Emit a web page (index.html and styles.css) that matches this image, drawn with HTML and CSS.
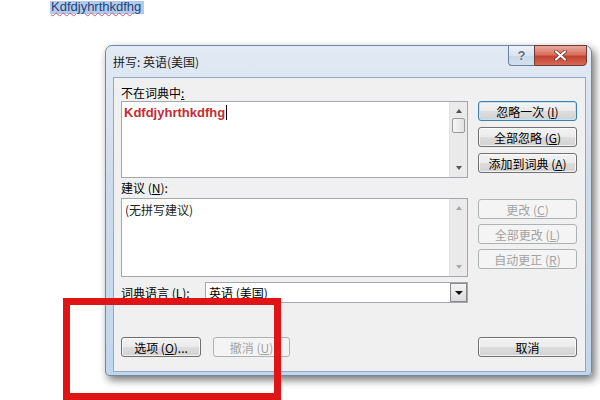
FILE: index.html
```html
<!DOCTYPE html>
<html lang="zh-CN">
<head>
    <meta charset="UTF-8">
    <title>拼写: 英语(美国)</title>
    <link rel="stylesheet" href="styles.css">
</head>
<body>
    <div class="doc-line"><span class="doc-word">Kdfdjyhrthkdfhg</span></div>

    <div class="window">
        <div class="titlebar">
            <span class="title">拼写: 英语(美国)</span>
            <div class="caption-buttons">
                <span class="cap-btn help">?</span>
                <span class="cap-btn close">
                    <svg width="13" height="11" viewBox="0 0 13 11">
                        <path d="M2 1.5 L11 9.5 M11 1.5 L2 9.5" stroke="#6b2a22" stroke-width="3.6" stroke-linecap="round"/>
                        <path d="M2 1.5 L11 9.5 M11 1.5 L2 9.5" stroke="#ffffff" stroke-width="2.2" stroke-linecap="round"/>
                    </svg>
                </span>
            </div>
        </div>

        <div class="client">
            <div class="label first">不在词典中<u>:</u></div>
            <div></div>

            <div class="textbox tall">
                <span class="bad-word">Kdfdjyhrthkdfhg</span><span class="caret"></span>
                <div class="vscroll">
                    <span class="arrow up"></span>
                    <span class="thumb"></span>
                    <span class="arrow down"></span>
                </div>
            </div>
            <div class="btn-stack">
                <button type="button" class="btn focus">忽略一次 (<u>I</u>)</button>
                <button type="button" class="btn">全部忽略 (<u>G</u>)</button>
                <button type="button" class="btn">添加到词典 (<u>A</u>)</button>
            </div>

            <div class="label second">建议 (<u>N</u>):</div>
            <div></div>

            <div class="textbox list">
                <span class="hint">(无拼写建议)</span>
                <div class="vscroll off">
                    <span class="arrow up"></span>
                    <span class="arrow down"></span>
                </div>
            </div>
            <div class="btn-stack lower">
                <button type="button" class="btn disabled">更改 (<u>C</u>)</button>
                <button type="button" class="btn disabled">全部更改 (<u>L</u>)</button>
                <button type="button" class="btn disabled">自动更正 (<u>R</u>)</button>
            </div>

            <div class="lang-row">
                <span class="lang-label">词典语言 (<u>L</u>):</span>
                <div class="select">
                    <span class="select-text">英语 (美国)</span>
                    <span class="select-btn"><span class="arrow down dark"></span></span>
                </div>
            </div>
            <div></div>

            <div class="bottom-row">
                <div class="bottom-left">
                    <button type="button" class="btn options">选项 (<u>O</u>)...</button>
                    <button type="button" class="btn disabled undo">撤消 (<u>U</u>)</button>
                </div>
                <button type="button" class="btn cancel">取消</button>
            </div>
        </div>
    </div>

    <div class="red-mark"></div>
</body>
</html>
```

FILE: styles.css
```css
body {
    margin: 0;
    width: 600px;
    height: 400px;
    overflow: hidden;
    position: relative;
    background-color: #ffffff;
    font-family: "Noto Sans CJK SC", "Liberation Sans", sans-serif;
    font-size: 12px;
    color: #000;
}

u {
    text-decoration: underline;
    text-underline-offset: 1px;
}

/* word selected in the document behind the dialog */
.doc-line {
    height: 13px;
    padding-left: 50px;
    line-height: 12px;
}

.doc-word {
    display: inline-block;
    padding: 0 3px 1px 1px;
    background-color: #b3cbe9;
    color: #1d4380;
    font-family: "Liberation Sans", sans-serif;
    font-size: 13px;
    text-decoration: underline wavy #c85a7a;
    text-decoration-thickness: 1px;
}

/* dialog window */
.window {
    margin: 32px 0 0 105px;
    width: 487px;
    height: 331px;
    box-sizing: border-box;
    border: 1px solid #6f88a3;
    border-radius: 7px 7px 4px 4px;
    background: linear-gradient(#e2eaf4, #cddcec 40%, #c2d6eb);
    box-shadow: 3px 4px 8px rgba(0, 0, 0, 0.55);
    display: flex;
    flex-direction: column;
}

.titlebar {
    height: 31px;
    flex-shrink: 0;
    display: flex;
    justify-content: space-between;
    align-items: flex-start;
    padding: 0 4px 0 7px;
}

.title {
    padding-top: 8px;
    line-height: 16px;
    color: #1a1a1a;
}

.caption-buttons {
    display: flex;
    margin-top: -1px;
}

.cap-btn {
    height: 21px;
    box-sizing: border-box;
    border: 1px solid #6a7f99;
    display: flex;
    align-items: center;
    justify-content: center;
}

.help {
    width: 26px;
    border-right: none;
    border-radius: 0 0 0 4px;
    background: linear-gradient(#eef3f9, #d8e3ef 50%, #c8d7e7 51%, #d3e0ee);
    font-family: "Liberation Sans", sans-serif;
    font-weight: bold;
    font-size: 13px;
    color: #5a6e86;
    text-shadow: 0 0 2px #ffffff;
}

.close {
    width: 53px;
    border-color: #6e3a35;
    border-radius: 0 0 4px 0;
    background: linear-gradient(#e9a99d, #d6705f 45%, #c4412f 55%, #d56a55);
}

.client {
    flex: 1;
    margin: 0 5px 3px 7px;
    border: 1px solid #94a9c1;
    background-color: #f0f0f0;
    padding: 0 8px 0 7px;
    display: grid;
    grid-template-columns: 347px 99px;
    column-gap: 10px;
    align-content: start;
}

.label.first {
    padding-top: 6px;
    height: 17px;
    line-height: 17px;
}

.label.second {
    height: 20px;
    line-height: 20px;
}

.textbox {
    position: relative;
    box-sizing: border-box;
    border: 1px solid #a4a7ad;
    background-color: #ffffff;
    padding: 1px 0 0 2px;
}

.textbox.tall {
    height: 77px;
}

.textbox.list {
    height: 79px;
    padding: 2px 0 0 3px;
}

.bad-word {
    font-family: "Liberation Sans", sans-serif;
    font-weight: bold;
    font-size: 13px;
    line-height: 15px;
    color: #c42b35;
}

.caret {
    display: inline-block;
    width: 1px;
    height: 15px;
    margin-left: 1px;
    vertical-align: -3px;
    background-color: #000;
}

.hint {
    line-height: 15px;
    color: #222;
}

/* scroll bars */
.vscroll {
    position: absolute;
    top: 0;
    right: 0;
    bottom: 0;
    width: 17px;
    background-color: #eaeaea;
    border-left: 1px solid #e2e2e2;
    display: flex;
    flex-direction: column;
    align-items: center;
}

.vscroll .arrow.up {
    margin-top: 7px;
}

.vscroll .arrow.down {
    margin-top: auto;
    margin-bottom: 7px;
}

.thumb {
    width: 13px;
    height: 15px;
    margin-top: 5px;
    box-sizing: border-box;
    border: 1px solid #9a9a9a;
    border-radius: 2px;
    background: linear-gradient(90deg, #f6f6f6, #e2e2e2);
}

.arrow {
    width: 0;
    height: 0;
    border-left: 3px solid transparent;
    border-right: 3px solid transparent;
}

.arrow.up {
    border-bottom: 4px solid #555;
}

.arrow.down {
    border-top: 4px solid #555;
}

.vscroll.off .arrow.up {
    border-bottom-color: #a8a8a8;
}

.vscroll.off .arrow.down {
    border-top-color: #a8a8a8;
}

.arrow.dark {
    border-top-color: #111;
    border-left-width: 4px;
    border-right-width: 4px;
}

/* push buttons */
.btn-stack {
    display: flex;
    flex-direction: column;
    gap: 6px;
}

.btn-stack.lower {
    padding-top: 1px;
    gap: 5px;
}

.btn {
    height: 20px;
    margin: 0;
    padding: 0;
    box-sizing: border-box;
    border: 1px solid #707070;
    border-radius: 3px;
    background: linear-gradient(#f3f3f3, #ebebeb 50%, #dddddd 51%, #d2d2d2);
    font-family: "Noto Sans CJK SC", "Liberation Sans", sans-serif;
    font-size: 12px;
    line-height: 17px;
    color: #000;
    text-align: center;
    box-shadow: inset 0 0 0 1px rgba(255, 255, 255, 0.7);
}

.btn.focus {
    border-color: #3c7fb1;
    box-shadow: inset 0 0 0 1px #bfe4f7;
}

.btn.disabled {
    border-color: #adb2b5;
    background: #f4f4f4;
    color: #a3a3a3;
    box-shadow: none;
}

/* language row */
.lang-row {
    margin-top: 5px;
    height: 21px;
    display: flex;
    align-items: center;
}

.lang-label {
    width: 84px;
    flex-shrink: 0;
}

.select {
    flex: 1;
    height: 21px;
    box-sizing: border-box;
    border: 1px solid #a4a7ad;
    background-color: #ffffff;
    display: flex;
    align-items: center;
}

.select-text {
    flex: 1;
    padding-left: 3px;
}

.select-btn {
    width: 17px;
    height: 19px;
    box-sizing: border-box;
    border: 1px solid #8a8a8a;
    background: linear-gradient(#f4f4f4, #dcdcdc);
    display: flex;
    align-items: center;
    justify-content: center;
}

/* bottom buttons */
.bottom-row {
    grid-column: 1 / 3;
    margin-top: 34px;
    display: flex;
    justify-content: space-between;
}

.bottom-left {
    display: flex;
    gap: 12px;
}

.btn.options {
    width: 80px;
}

.btn.undo {
    width: 77px;
}

.btn.cancel {
    width: 99px;
}

/* red annotation box drawn over the screenshot */
.red-mark {
    position: absolute;
    left: 63px;
    top: 298px;
    width: 218px;
    height: 102px;
    box-sizing: border-box;
    border: 7px solid #e01414;
}
```
